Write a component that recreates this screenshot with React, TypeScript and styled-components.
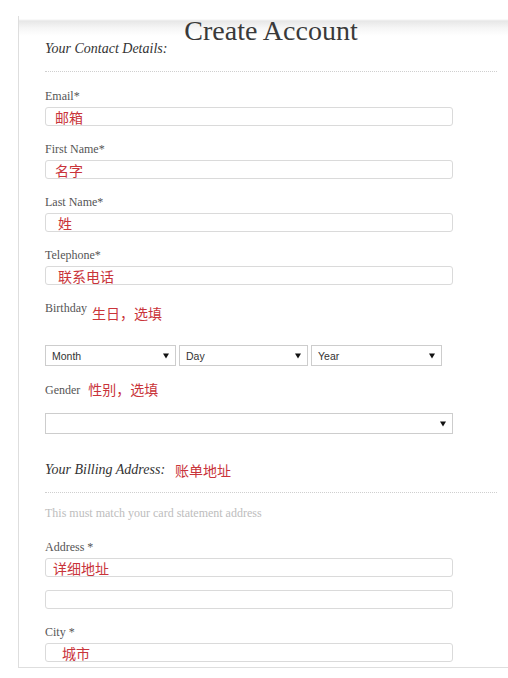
import React from 'react';
import styled, { createGlobalStyle } from 'styled-components';

const GlobalStyle = createGlobalStyle`
    html, body {
        margin: 0;
        padding: 0;
        background: #fff;
    }
    body {
        font-family: "Liberation Serif", "Noto Sans CJK SC", serif;
        overflow: hidden;
    }
`

const RED = '#c9343a'
const CJK = '"Noto Sans CJK SC", "Noto Sans", sans-serif'

const Panel = styled.div`
    margin: 16px 0 0 18px;
    padding: 2px 0 5px 26px;
    border-left: 1px solid #dedede;
    border-bottom: 1px solid #dedede;
    background: linear-gradient(to bottom, #fff 0px, #fff 3px, #e7e7e7 5px, #f6f6f6 12px, #fff 20px);
`

const Title = styled.h1`
    width: 452px;
    margin: 0;
    font-family: "Liberation Serif", serif;
    font-weight: normal;
    font-size: 28px;
    line-height: 26px;
    color: #3a3a3a;
    text-align: center;
`

const SectionHead = styled.div<{ top: number }>`
    display: flex;
    align-items: flex-start;
    margin-top: ${props => props.top}px;
    font-style: italic;
    font-size: 14px;
    line-height: 16px;
    color: #333;
`

const Divider = styled.div<{ top: number }>`
    width: 452px;
    margin-top: ${props => props.top}px;
    border-top: 1px dotted #cfcfcf;
`

const Note = styled.div`
    margin-top: 13px;
    font-size: 12px;
    line-height: 14px;
    color: #bdbdbd;
`

const Field = styled.div<{ top: number }>`
    margin-top: ${props => props.top}px;
`

const LabelRow = styled.div`
    display: flex;
    align-items: flex-start;
`

const Label = styled.label`
    display: block;
    font-size: 12px;
    line-height: 14px;
    color: #555;
`

const Annotation = styled.span<{ shift: number; gap: number }>`
    margin-top: ${props => props.shift}px;
    margin-left: ${props => props.gap}px;
    font-family: ${CJK};
    font-style: normal;
    font-size: 14px;
    line-height: 16px;
    color: ${RED};
`

const InputBox = styled.div<{ top?: number }>`
    position: relative;
    box-sizing: border-box;
    width: 408px;
    height: 19px;
    margin-top: ${props => props.top ?? 4}px;
    border: 1px solid #dadada;
    border-radius: 3px;
    background: #fff;
`

const InputHint = styled.span<{ left: number }>`
    position: absolute;
    top: 1px;
    left: ${props => props.left}px;
    font-family: ${CJK};
    font-size: 14px;
    line-height: 16px;
    color: ${RED};
    white-space: nowrap;
`

const SelectRow = styled.div`
    display: flex;
    gap: 3px;
    margin-top: 24px;
`

const Select = styled.div<{ width: number; top?: number }>`
    box-sizing: border-box;
    display: flex;
    align-items: center;
    justify-content: space-between;
    width: ${props => props.width}px;
    height: 21px;
    margin-top: ${props => props.top ?? 0}px;
    padding: 0 6px 0 6px;
    border: 1px solid #cdcdcd;
    background: #fff;
    font-family: "Liberation Sans", Arial, sans-serif;
    font-size: 10.5px;
    color: #333;
`

const Arrow = () => (
    <svg width="6" height="6" viewBox="0 0 6 6">
        <path d="M0 0.5 H6 L3 5.5 Z" fill="#111" />
    </svg>
)

type TextFieldProps = {
    label: string;
    hint?: string;
    hintLeft?: number;
    top?: number;
}

const TextField = ({ label, hint, hintLeft = 9, top = 16 }: TextFieldProps) => (
    <Field top={top}>
        <Label>{label}</Label>
        <InputBox>
            {hint && <InputHint left={hintLeft}>{hint}</InputHint>}
        </InputBox>
    </Field>
)

export default function App() {
    return (
        <>
            <GlobalStyle />
            <Panel>
                <Title>Create Account</Title>
                <SectionHead top={-3}>Your Contact Details:</SectionHead>
                <Divider top={14} />

                <TextField label="Email*" hint="邮箱" hintLeft={9} top={17} />
                <TextField label="First Name*" hint="名字" hintLeft={9} />
                <TextField label="Last Name*" hint="姓" hintLeft={12} />
                <TextField label="Telephone*" hint="联系电话" hintLeft={12} />

                <Field top={16}>
                    <LabelRow>
                        <Label>Birthday</Label>
                        <Annotation shift={4} gap={5}>生日，选填</Annotation>
                    </LabelRow>
                </Field>
                <SelectRow>
                    <Select width={131}>Month<Arrow /></Select>
                    <Select width={129}>Day<Arrow /></Select>
                    <Select width={131}>Year<Arrow /></Select>
                </SelectRow>

                <Field top={17}>
                    <LabelRow>
                        <Label>Gender</Label>
                        <Annotation shift={-2} gap={8}>性别，选填</Annotation>
                    </LabelRow>
                </Field>
                <Select width={408} top={16}><span /><Arrow /></Select>

                <SectionHead top={28}>
                    Your Billing Address:
                    <Annotation shift={0} gap={10}>账单地址</Annotation>
                </SectionHead>
                <Divider top={14} />
                <Note>This must match your card statement address</Note>

                <TextField label="Address *" hint="详细地址" hintLeft={7} top={20} />
                <InputBox top={13} />
                <TextField label="City *" hint="城市" hintLeft={16} top={16} />
            </Panel>
        </>
    )
}
